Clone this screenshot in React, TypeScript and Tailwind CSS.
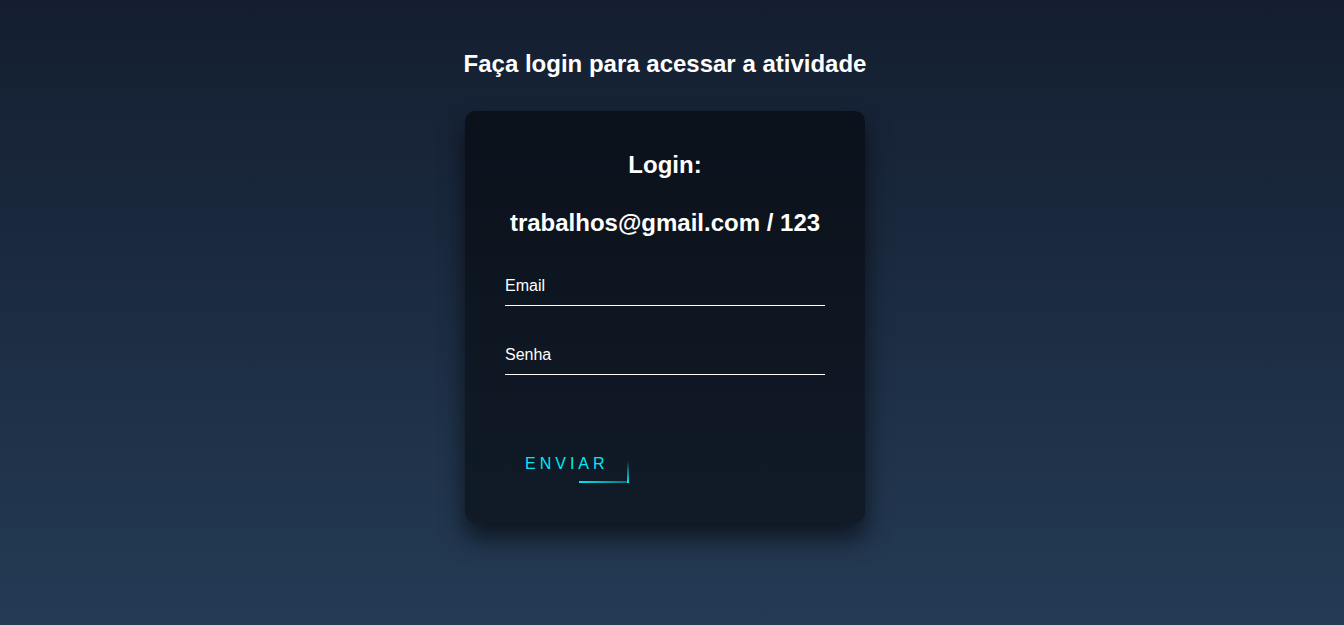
export default function App() {
  return (
    <div className="min-h-screen w-full bg-gradient-to-b from-[#141e30] to-[#243b55] font-['Liberation_Sans',Arial,sans-serif] flex flex-col items-center pt-[50px] pr-[14px]">
      <h1 className="text-white text-2xl font-bold leading-[27.6px] mb-[33px]">
        Faça login para acessar a atividade
      </h1>

      <div className="w-[400px] p-10 bg-black/50 rounded-[10px] shadow-[0_15px_25px_rgba(0,0,0,0.6)]">
        <h2 className="text-white text-2xl font-bold text-center leading-[28px] mb-[30px]">
          Login:
        </h2>
        <h2 className="text-white text-2xl font-bold text-center leading-[28px] mb-[30px]">
          trabalhos@gmail.com / 123
        </h2>

        <form onSubmit={(e) => e.preventDefault()}>
          <div className="relative">
            <input
              type="text"
              className="w-full py-[10px] text-base text-white mb-[30px] bg-transparent border-0 border-b border-white outline-none leading-[18px]"
            />
            <label className="absolute top-0 left-0 py-[10px] text-base text-white leading-[18px] pointer-events-none">
              Email
            </label>
          </div>
          <div className="relative">
            <input
              type="password"
              className="w-full py-[10px] text-base text-white mb-[30px] bg-transparent border-0 border-b border-white outline-none leading-[18px]"
            />
            <label className="absolute top-0 left-0 py-[10px] text-base text-white leading-[18px] pointer-events-none">
              Senha
            </label>
          </div>

          <button
            type="submit"
            className="relative inline-block mt-10 px-5 py-[10px] text-base leading-[18px] text-[#03e9f4] uppercase tracking-[4px] overflow-hidden bg-transparent"
          >
            {/* animated edge lines, captured mid-run */}
            <span className="absolute bottom-0 right-0 w-[50px] h-[2px] bg-gradient-to-r from-[#03e9f4] to-[#03e9f4]/40" />
            <span className="absolute bottom-0 right-0 w-[2px] h-[22px] bg-gradient-to-b from-transparent to-[#03e9f4]" />
            Enviar
          </button>
        </form>
      </div>
    </div>
  );
}
